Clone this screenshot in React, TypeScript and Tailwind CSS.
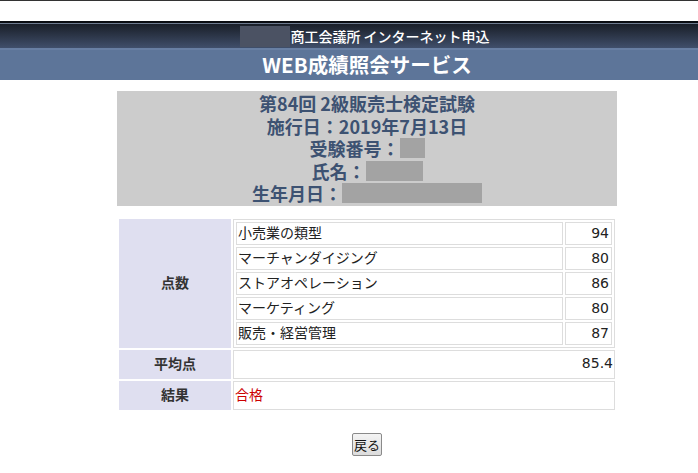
const scores = [
  { name: "小売業の類型", score: 94 },
  { name: "マーチャンダイジング", score: 80 },
  { name: "ストアオペレーション", score: 86 },
  { name: "マーケティング", score: 80 },
  { name: "販売・経営管理", score: 87 },
];

function Redacted({ w }: { w: string }) {
  return <span className={`inline-block h-[20px] bg-[#a3a3a3] ${w}`} />;
}

export default function App() {
  return (
    <div className="h-[473px] w-[698px] overflow-hidden bg-white font-['Noto_Sans_CJK_JP','Noto_Sans',sans-serif]">
      <div className="w-[734px]">
        {/* header */}
        <div className="h-[1px] bg-[#333333]" />
        <div className="h-[20px] bg-white" />
        <div className="h-[2px] bg-[#0a0d12]" />
        <div className="h-[1px] bg-[#6d7a8e]" />
        <div className="flex h-[24px] items-center justify-center bg-gradient-to-b from-[#1a1f29] to-[#404f6b] pr-[4px]">
          <span className="h-[21px] w-[50px] bg-[#4b5263]" />
          <span className="text-[14px] leading-none font-medium text-white">
            商工会議所 インターネット申込
          </span>
        </div>
        <div className="h-[2px] bg-[#687fa3]" />
        <div className="flex h-[30px] items-center justify-center bg-[#5d7599] pb-[1px] text-[20.5px] leading-none font-bold text-white">
          WEB成績照会サービス
        </div>

        {/* exam info */}
        <div className="mx-auto mt-[11px] w-[500px] bg-[#cccccc] py-[1px] text-center text-[18px] leading-[22.5px] font-bold text-[#3d5272]">
          <p>第84回 2級販売士検定試験</p>
          <p>施行日：2019年7月13日</p>
          <p className="flex items-center justify-center">
            受験番号：<Redacted w="w-[25px]" />
          </p>
          <p className="flex items-center justify-center">
            氏名：<Redacted w="w-[57px]" />
          </p>
          <p className="flex items-center justify-center">
            生年月日：<Redacted w="w-[140px]" />
          </p>
        </div>

        {/* results */}
        <div className="mx-auto mt-[11px] flex w-[500px] flex-col gap-[2px] p-[2px] text-[14px] text-[#222222]">
          <div className="flex gap-[2px]">
            <div className="flex w-[112px] items-center justify-center bg-[#dfdff0] pb-[2px] font-bold text-[#333333]">
              点数
            </div>
            <div className="flex flex-1 flex-col gap-[2px] border border-[#dddddd] p-[2px]">
              {scores.map((s) => (
                <div key={s.name} className="flex h-[23px] gap-[2px]">
                  <div className="flex flex-1 items-center border border-[#dddddd] pb-[2px] pl-[1px] leading-none">
                    {s.name}
                  </div>
                  <div className="flex w-[47px] items-center justify-end border border-[#dddddd] pr-[2px] pb-[1px] font-['DejaVu_Sans',sans-serif] text-[14px] leading-none">
                    {s.score}
                  </div>
                </div>
              ))}
            </div>
          </div>
          <div className="flex h-[29px] gap-[2px]">
            <div className="flex w-[112px] items-center justify-center bg-[#dfdff0] pb-[2px] font-bold text-[#333333]">
              平均点
            </div>
            <div className="flex flex-1 items-center justify-end border border-[#dddddd] pr-[1px] pb-[1px] font-['DejaVu_Sans',sans-serif] text-[14px]">
              85.4
            </div>
          </div>
          <div className="flex h-[29px] gap-[2px]">
            <div className="flex w-[112px] items-center justify-center bg-[#dfdff0] pb-[2px] font-bold text-[#333333]">
              結果
            </div>
            <div className="flex flex-1 items-center border border-[#dddddd] pb-[2px] pl-[1px] text-[#cc0000]">
              合格
            </div>
          </div>
        </div>

        <div className="mt-[21px] flex justify-center">
          <button className="h-[23px] w-[30px] rounded-[2px] border border-[#8a8a8a] bg-gradient-to-b from-[#f4f4f4] to-[#dcdcdc] text-[13px] leading-none text-[#111111]">
            戻る
          </button>
        </div>
      </div>
    </div>
  );
}
